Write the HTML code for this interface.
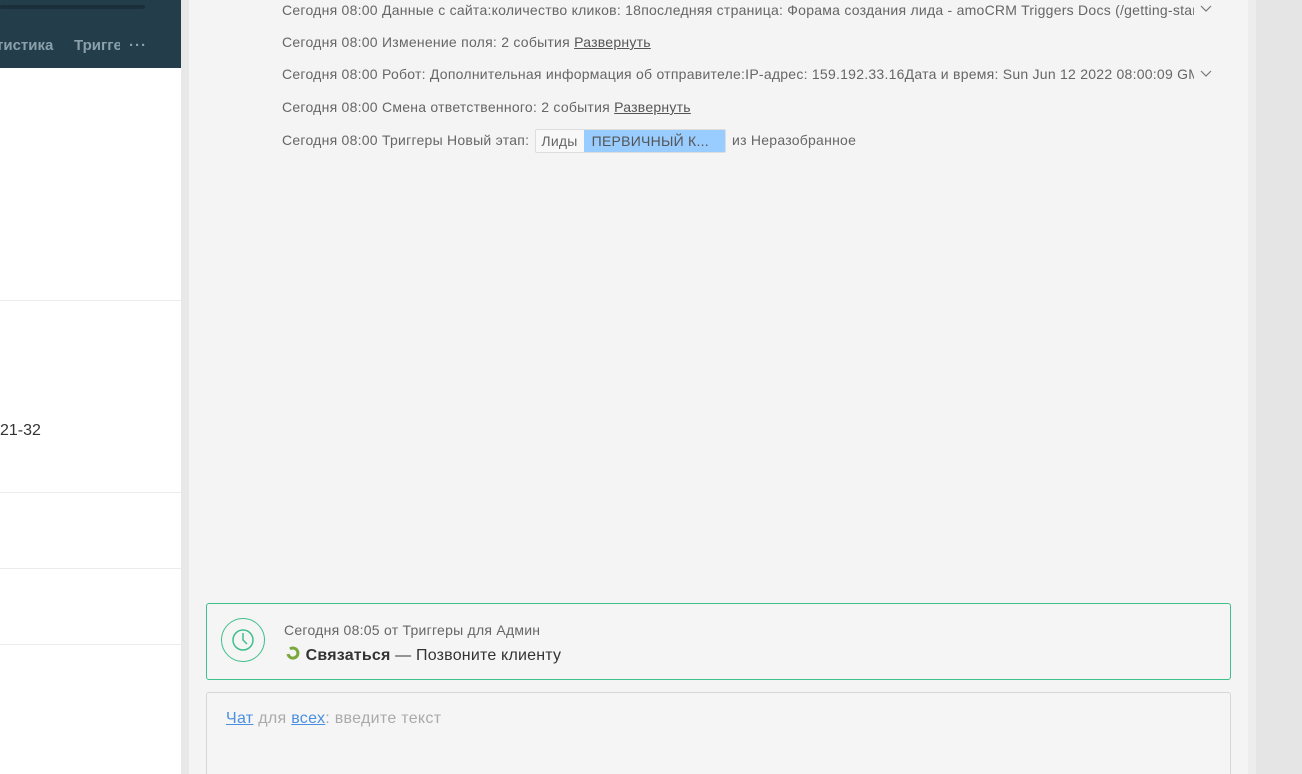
<!DOCTYPE html>
<html><head><meta charset="utf-8"><style>
*{margin:0;padding:0;box-sizing:border-box}
html,body{width:1302px;height:774px;overflow:hidden}
body{background:#e5e5e5;font-family:"Liberation Sans","DejaVu Sans",sans-serif;position:relative}
.left{position:absolute;left:0;top:0;width:181px;height:774px;background:#fff}
.hdr{position:absolute;left:0;top:0;width:181px;height:68px;background:#233d4a}
.bar{position:absolute;left:0;top:5px;width:145px;height:4px;background:#1a2f3a;border-radius:2px}
.nav{position:absolute;top:37px;font-size:15px;font-weight:bold;color:#8aa0ab;white-space:nowrap}
.hl{position:absolute;left:0;width:181px;height:1px;background:#ececec}
.gap{position:absolute;left:181px;top:0;width:8px;height:774px;background:#e8e8e8}
.main{position:absolute;left:189px;top:0;width:1059px;height:774px;background:#f4f4f4;overflow:hidden}
.r1{position:absolute;left:1248px;top:0;width:8px;height:774px;background:#ededed}
.row{position:absolute;left:93px;font-size:14px;letter-spacing:0.25px;color:#666;white-space:nowrap;overflow:hidden;width:912px}
.row u{color:#555}
.chev{position:absolute;left:1011px}
.pill{display:inline-block;vertical-align:middle;height:24px;line-height:22px;border:1px solid #ddd;border-radius:2px;background:#f8f8f8;font-size:14px;color:#666;padding:0 0 0 5px;margin:0 2px 0 2px}
.pill span{display:inline-block;background:#99ccff;color:#555;padding:0 16px 0 8px;margin-left:6px;height:22px}
.task{position:absolute;left:17px;top:603px;width:1025px;height:77px;border:1px solid #3fbf8b;border-radius:3px;background:#f5f5f5}
.circ{position:absolute;left:14px;top:14px;width:44px;height:44px;border:1px solid #3fbf8b;border-radius:50%}
.chat{position:absolute;left:17px;top:692px;width:1025px;height:90px;border:1px solid #d6d6d6;border-radius:3px;background:#f5f5f5}
</style></head><body>
<div class="left">
<div class="hdr"><div class="bar"></div>
<div class="nav" style="left:-4px">тистика</div>
<div class="nav" style="left:74px;width:46px;overflow:hidden">Триггеры</div>
<div class="nav" style="left:129px;top:37px;letter-spacing:1px">···</div></div>
<div class="hl" style="top:300px"></div>
<div style="position:absolute;left:0;top:422px;font-size:16px;color:#333">21-32</div>
<div class="hl" style="top:492px"></div>
<div class="hl" style="top:568px"></div>
<div class="hl" style="top:644px"></div>
</div>
<div class="gap"></div>
<div class="main">
<div class="row" style="top:2px">Сегодня 08:00 Данные с сайта:количество кликов: 18последняя страница: Форама создания лида - amoCRM Triggers Docs (/getting-started</div>
<svg class="chev" style="top:5px" width="12" height="8" viewBox="0 0 12 8"><path d="M1 1l5 5 5-5" fill="none" stroke="#777" stroke-width="1.2"/></svg>
<div class="row" style="top:34px">Сегодня 08:00 Изменение поля: 2 события <u>Развернуть</u></div>
<div class="row" style="top:66px">Сегодня 08:00 Робот: Дополнительная информация об отправителе:IP-адрес: 159.192.33.16Дата и время: Sun Jun 12 2022 08:00:09 GMT</div>
<svg class="chev" style="top:70px" width="12" height="8" viewBox="0 0 12 8"><path d="M1 1l5 5 5-5" fill="none" stroke="#777" stroke-width="1.2"/></svg>
<div class="row" style="top:99px">Сегодня 08:00 Смена ответственного: 2 события <u>Развернуть</u></div>
<div class="row" style="top:128px;line-height:24px">Сегодня 08:00 Триггеры Новый этап: <span class="pill">Лиды<span>ПЕРВИЧНЫЙ К...</span></span> из Неразобранное</div>
<div class="task">
<div class="circ"><svg width="44" height="44" viewBox="0 0 44 44" style="position:absolute;left:-1px;top:-1px"><circle cx="22" cy="22" r="10" fill="none" stroke="#3fbf8b" stroke-width="1.5"/><path d="M22 15v7l4 4" fill="none" stroke="#3fbf8b" stroke-width="1.5"/></svg></div>
<div style="position:absolute;left:77px;top:18px;font-size:14px;letter-spacing:0.25px;color:#666">Сегодня 08:05 от Триггеры для Админ</div>
<div style="position:absolute;left:78px;top:41px;font-size:16px;letter-spacing:0.2px;color:#333"><svg width="16" height="16" viewBox="0 0 16 16" style="vertical-align:-1px"><path d="M3 9a5 5 0 1 0 2-5" fill="none" stroke="#7aa83a" stroke-width="3"/></svg> <b>Связаться</b> — Позвоните клиенту</div>
</div>
<div class="chat"><div style="position:absolute;left:19px;top:17px;font-size:16px;letter-spacing:0.3px;color:#aaa"><u style="color:#4a8fe0">Чат</u> для <u style="color:#4a8fe0">всех</u>: введите текст</div></div>
</div>
<div class="r1"></div>
</body></html>
